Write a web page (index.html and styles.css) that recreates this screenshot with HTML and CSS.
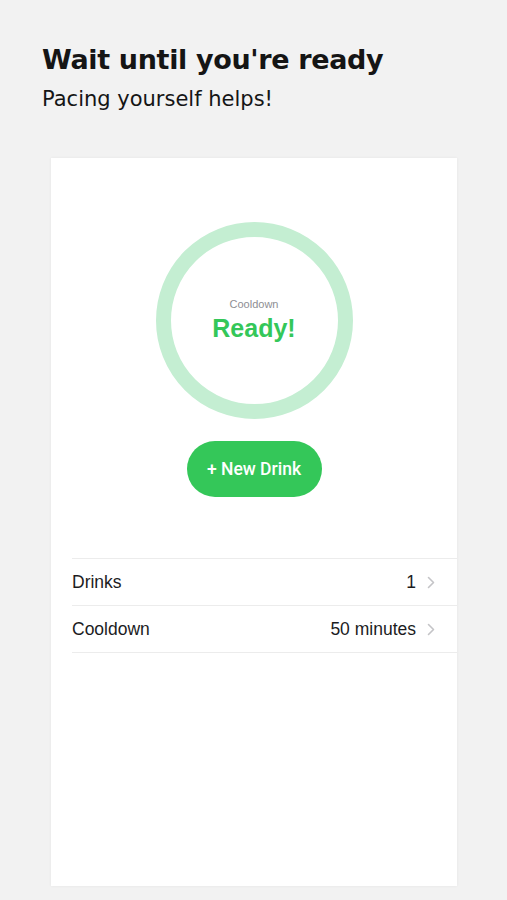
FILE: index.html
```html
<!DOCTYPE html>
<html lang="en">
<head>
  <meta charset="UTF-8">
  <meta name="viewport" content="width=device-width, initial-scale=1">
  <title>Wait until you're ready</title>
  <link rel="stylesheet" href="styles.css">
</head>
<body>
  <header class="intro">
    <h1 class="intro-title">Wait until you're ready</h1>
    <p class="intro-sub">Pacing yourself helps!</p>
  </header>

  <main class="card">
    <div class="ring">
      <span class="ring-label">Cooldown</span>
      <span class="ring-status">Ready!</span>
    </div>

    <button class="new-drink">+ New Drink</button>

    <ul class="stats">
      <li class="stat">
        <span class="stat-name">Drinks</span>
        <span class="stat-value">1</span>
        <svg class="chevron" viewBox="0 0 8 13" width="8" height="13"><path d="M1.5 1.5 L6.5 6.5 L1.5 11.5" fill="none" stroke="#c4c4c7" stroke-width="1.6" stroke-linecap="round" stroke-linejoin="round"/></svg>
      </li>
      <li class="stat">
        <span class="stat-name">Cooldown</span>
        <span class="stat-value">50 minutes</span>
        <svg class="chevron" viewBox="0 0 8 13" width="8" height="13"><path d="M1.5 1.5 L6.5 6.5 L1.5 11.5" fill="none" stroke="#c4c4c7" stroke-width="1.6" stroke-linecap="round" stroke-linejoin="round"/></svg>
      </li>
    </ul>
  </main>
</body>
</html>
```

FILE: styles.css
```css
body {
  margin: 0;
  background-color: #f2f2f2;
  font-family: "Liberation Sans", Arial, sans-serif;
  color: #1c1c1e;
}
.intro { padding: 42px 42px 0; }
.intro-title {
  margin: 0;
  font-family: "DejaVu Sans", Verdana, sans-serif;
  font-size: 27px;
  font-weight: bold;
  letter-spacing: -0.35px;
  line-height: 36px;
  color: #151515;
}
.intro-sub {
  margin: 6px 0 0;
  font-family: "DejaVu Sans", Verdana, sans-serif;
  font-size: 21px;
  line-height: 30px;
  color: #151515;
}
.card {
  margin: 44px 50px 14px 51px;
  height: 728px;
  background: #fff;
  box-shadow: 0 0 3px rgba(0,0,0,0.06);
  display: flex;
  flex-direction: column;
  align-items: center;
  padding-top: 64px;
  box-sizing: border-box;
}
/* cooldown ring */
.ring {
  width: 197px;
  height: 197px;
  box-sizing: border-box;
  border: 15px solid #c4eed2;
  border-radius: 50%;
  display: flex;
  flex-direction: column;
  align-items: center;
  justify-content: center;
}
.ring-label { font-size: 11px; color: #8e8e93; }
.ring-status { font-size: 25px; font-weight: bold; color: #34c759; margin-top: 4px; }
.new-drink {
  margin-top: 22px;
  width: 135px;
  height: 56px;
  border: none;
  border-radius: 28px;
  background: #34c759;
  color: #fff;
  font-family: Roboto, sans-serif;
  font-weight: 500;
  font-size: 17.5px;
  cursor: pointer;
}
.stats {
  list-style: none;
  margin: 61px 0 0;
  padding: 0 0 0 21px;
  align-self: stretch;
}
.stat {
  display: flex;
  align-items: center;
  gap: 10px;
  height: 46px;
  padding-right: 22px;
  border-top: 1px solid #ececec;
  font-size: 17.5px;
}
.stat:last-child { border-bottom: 1px solid #ececec; }
.stat-name { flex: 1; }
.chevron { margin-left: 1px; }
```
